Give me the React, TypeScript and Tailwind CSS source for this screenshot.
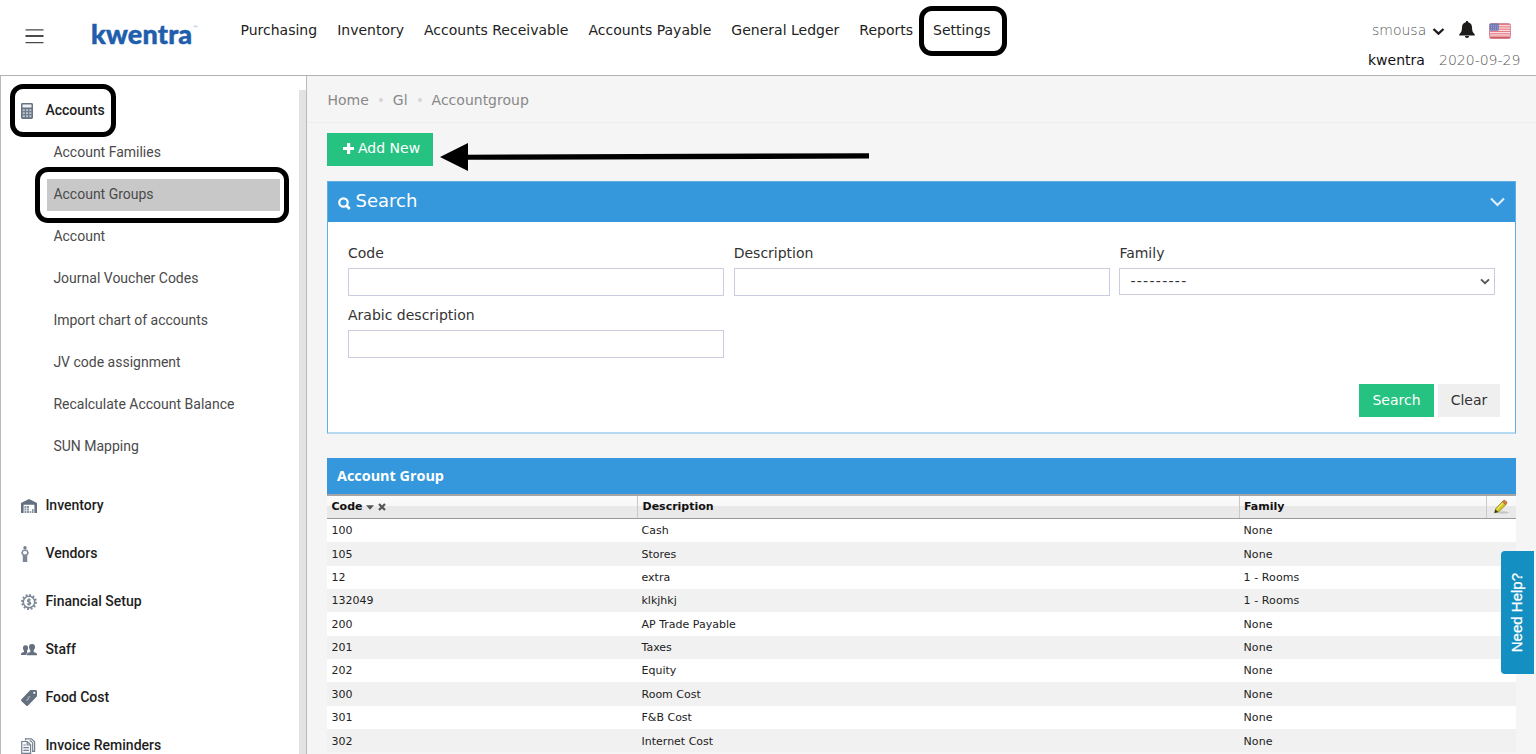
import React from "react";

const navItems = [
  "Purchasing",
  "Inventory",
  "Accounts Receivable",
  "Accounts Payable",
  "General Ledger",
  "Reports",
];

const accountLinks = [
  "Account Families",
  "Account Groups",
  "Account",
  "Journal Voucher Codes",
  "Import chart of accounts",
  "JV code assignment",
  "Recalculate Account Balance",
  "SUN Mapping",
];

const rows: [string, string, string][] = [
  ["100", "Cash", "None"],
  ["105", "Stores", "None"],
  ["12", "extra", "1 - Rooms"],
  ["132049", "klkjhkj", "1 - Rooms"],
  ["200", "AP Trade Payable", "None"],
  ["201", "Taxes", "None"],
  ["202", "Equity", "None"],
  ["300", "Room Cost", "None"],
  ["301", "F&B Cost", "None"],
  ["302", "Internet Cost", "None"],
];

function CalculatorIcon() {
  return (
    <svg width="16" height="16" viewBox="0 0 16 16">
      <rect x="0" y="0" width="12" height="16" rx="1.4" fill="#687483" />
      <rect x="1.5" y="1.5" width="9" height="3" rx="0.5" fill="#eef1f4" />
      {[6.2, 9.2, 12.2].map((y) =>
        [1.6, 4.9, 8.2].map((x) => (
          <rect key={`${x}-${y}`} x={x} y={y} width="2.2" height="2" fill="#b9c3cf" />
        ))
      )}
    </svg>
  );
}

function WarehouseIcon() {
  return (
    <svg width="16" height="16" viewBox="0 0 16 16">
      <path d="M0 5 8 1l8 4v10h-2.600V6.800H2.600V15H0z" fill="#64707f" />
      <path d="M3.400 8h2v2h-2zM6 8h2v2H6zM3.400 10.500h2v2h-2zM6 10.500h2v2H6zM3.400 13h2v2h-2zM6 13h2v2H6zM8.700 13h1.600v2H8.700zM11 11h1.600v4H11z" fill="#8b96a3" />
    </svg>
  );
}

function PersonIcon() {
  return (
    <svg width="16" height="16" viewBox="0 0 16 16">
      <circle cx="4" cy="1.800" r="1.700" fill="#74808e" />
      <path d="M2.300 4 1 7l1.300 2.200M5.700 4 7 7 5.700 9.200" stroke="#818c99" strokeWidth="1.600" fill="none" />
      <path d="M2 3.400h4L4 5.600z" fill="#74808e" />
      <path d="M1.800 8.400h4.400V16H1.800z" fill="#7b8794" />
    </svg>
  );
}

function GearMoneyIcon() {
  return (
    <svg width="16" height="16" viewBox="0 0 16 16" fill="none">
      <circle cx="8" cy="8" r="7" stroke="#7b8794" strokeWidth="1.900" strokeDasharray="1.900 1.765" />
      <circle cx="8" cy="8" r="5.700" stroke="#7b8794" strokeWidth="1.500" />
      <path d="M9.800 6.200C9.300 5.400 6.400 5.200 6.400 6.700c0 1.500 3.300.9 3.300 2.500 0 1.500-2.900 1.300-3.500.4M8 4.300v7.400" stroke="#74808e" strokeWidth="1.200" />
    </svg>
  );
}

function StaffIcon() {
  return (
    <svg width="16" height="16" viewBox="0 0 16 16" fill="#64707f">
      <path d="M4.500 3.200c1.800 0 2.600 1.100 2.600 2.700 0 1.200-.5 2.200-1.100 2.800v1.400l.8.400c-1 .6-1.300 1.500-1.300 2.500H0v-1.200c0-1.200 1.700-1.400 3-1.900V8.700c-.6-.6-1-1.600-1-2.800 0-1.600.7-2.700 2.500-2.700z" />
      <path d="M11 2c2.100 0 3 1.300 3 3.100 0 1.400-.6 2.500-1.300 3.200v1.600c1.500.6 3.300.9 3.300 2.300V13.300H6v-1.100c0-1.400 1.900-1.700 3.300-2.300V8.300C8.600 7.600 8 6.500 8 5.100 8 3.300 8.900 2 11 2z" />
    </svg>
  );
}

function TagIcon() {
  return (
    <svg width="16" height="16" viewBox="0 0 16 16">
      <path fill="#64707f" fillRule="evenodd" d="M9.300 0H15l1 1v5.200l-8.900 9.200c-.7.7-1.300.7-2 0L.5 11.200c-.6-.7-.6-1.300 0-2zM13.300 1.700a1.100 1.100 0 1 0 0 2.200 1.100 1.100 0 0 0 0-2.200z" />
      <path d="M9 7c-1.400-.9-2.700.3-1.800 1.400s-.5 2.300-1.800 1.400M5.500 10.600l3.600-4" stroke="#aab4bf" strokeWidth="0.900" fill="none" />
    </svg>
  );
}

function InvoiceIcon() {
  return (
    <svg width="16" height="16" viewBox="0 0 16 16" fill="none" stroke="#75818f" strokeWidth="1.200">
      <path d="M4.500 2.600V.8h6l3.100 3v9.600H11" />
      <path d="M8.500 2.900h1.200l2 2v8.400" />
      <path d="M.7 3.500h5.600l3.300 3.300v8.500H.7z" fill="#f4f6f8" />
      <path d="M6.200 3.700V7h3.300M2.400 7h2.200M2.400 9.700h5.500M2.400 12.400h5.500" />
    </svg>
  );
}

const sections: { label: string; icon: React.ReactNode }[] = [
  { label: "Inventory", icon: <WarehouseIcon /> },
  { label: "Vendors", icon: <PersonIcon /> },
  { label: "Financial Setup", icon: <GearMoneyIcon /> },
  { label: "Staff", icon: <StaffIcon /> },
  { label: "Food Cost", icon: <TagIcon /> },
  { label: "Invoice Reminders", icon: <InvoiceIcon /> },
];

function UsFlag() {
  return (
    <svg width="22" height="16" viewBox="0 0 22 16">
      <rect x="0.500" y="0.500" width="21" height="15" rx="1.800" fill="#fbeaec" stroke="#d58f99" />
      {[1, 3.300, 5.600, 7.900, 10.200, 12.500].map((y) => (
        <rect key={y} x="1" y={y} width="20" height="1.200" fill="#e77a84" />
      ))}
      <rect x="1" y="14" width="20" height="1.200" fill="#cf5968" />
      <rect x="0.600" y="0.600" width="9.200" height="7.200" rx="1" fill="#6f79b6" />
      <path d="M2 2.500h7M2 4.300h7M2 6.100h7" stroke="#aab1dc" strokeWidth="0.700" strokeDasharray="1 1" />
    </svg>
  );
}

function PencilIcon() {
  return (
    <svg width="17" height="16" viewBox="0 0 17 16">
      <ellipse cx="10" cy="13.500" rx="6" ry="1.200" fill="#c6c6c6" />
      <path d="M1.600 13.800 2.800 9.400 9.300 2.700l3.400 3.100-6.800 6.900z" fill="#d3c71f" stroke="#8f872b" strokeWidth="0.800" />
      <path d="m4 10.300 6.400-6.500" stroke="#efe97a" strokeWidth="1.200" />
      <path d="m9.300 2.700 1.500-1.500c.6-.5 3.500 1.700 3.200 2.800l-1.300 1.800z" fill="#d27b35" stroke="#a85e26" strokeWidth="0.600" />
      <path d="m1.500 14 .9-3.500 2.700 2.500z" fill="#33331f" />
    </svg>
  );
}

function TextField({ label }: { label: string }) {
  return (
    <label className="block h-[62px]">
      <span className="block h-[25px] text-[14px] leading-[20px] text-[#333]">{label}</span>
      <input className="block h-[28px] w-full border border-[#c9cddd] bg-white px-3 outline-none" />
    </label>
  );
}

export default function App() {
  return (
    <div className="relative flex h-[754px] w-[1536px] flex-col overflow-hidden bg-[#f5f5f5] font-['DejaVu_Sans',sans-serif]">
      <header className="flex h-[76px] shrink-0 border-b border-[#b3b3b3] bg-white">
        <div className="flex w-[240.500px] shrink-0 pl-[25px]">
          <svg className="mt-[29px]" width="19" height="15" viewBox="0 0 19 15" fill="#4a4a4a">
            <path d="M0.500 0.200h18v1.300H.5zM.5 6h18v2H.5zM.5 13h18v1.300H.5z" />
          </svg>
          <div className="mt-[17px] ml-[47px] flex h-[34px] items-start text-[#1f5ead]">
            <span className="font-['Lato',sans-serif] text-[27px] leading-[34px] font-black tracking-[0.200px] [-webkit-text-stroke:0.500px_#1f5ead]">kwentra</span>
            <span className="mt-[8px] text-[6px] leading-[5px] text-[#6c97cb]">™</span>
          </div>
        </div>
        <nav className="flex grow gap-[20px] pt-[20px] text-[14px] leading-[20px] text-[#222]">
          {navItems.map((item) => (
            <a key={item}>{item}</a>
          ))}
          <a className="relative">
            Settings
            <span className="absolute -top-[14.500px] -left-[14.500px] h-[50px] w-[88px] rounded-[13px] border-[5px] border-black" />
          </a>
        </nav>
        <div className="flex w-[168px] shrink-0 flex-col text-[14px]">
          <div className="mt-[20px] flex h-[20px] items-center pl-[4px] leading-[20px]">
            <span className="w-[54px] font-extralight text-[#555]">smousa</span>
            <svg className="mt-[2px] ml-[6px]" width="13" height="9" viewBox="0 0 13 9" fill="none">
              <path d="m1.500 2 5 4.600 5-4.600" stroke="#1c1c1c" strokeWidth="2.300" />
            </svg>
            <svg className="-mt-px ml-[14px]" width="16" height="17" viewBox="0 0 16 17" fill="#1d1a1a">
              <path d="M8 0c.8 0 1.200.5 1.200 1.300C11.600 1.900 13 3.800 13 6.200c0 3.800 1 5.600 2.700 7v1.300H.3v-1.300C2 11.800 3 10 3 6.200c0-2.400 1.400-4.300 3.800-4.900C6.800.5 7.200 0 8 0zM5.900 15h4.200c0 1.200-.9 2-2.100 2s-2.100-.8-2.100-2z" />
            </svg>
            <span className="mt-[2px] ml-[14px]">
              <UsFlag />
            </span>
          </div>
          <div className="mt-[10px] flex leading-[20px]">
            <span className="w-[71px] text-[#111]">kwentra</span>
            <span className="font-extralight text-[#555]">2020-09-29</span>
          </div>
        </div>
      </header>

      <div className="flex min-h-0 grow">
        <aside className="flex w-[307px] shrink-0 justify-between border-x border-[#b9b9b9] bg-white font-['Roboto',sans-serif] text-[14px]">
          <div className="flex flex-col">
            <div className="relative mt-[19px] flex h-[32px] shrink-0 items-center pl-[20px]">
              <CalculatorIcon />
              <span className="ml-[8.400px] pb-px font-medium text-[#1e1e1e]">Accounts</span>
              <span className="absolute -top-[11.500px] left-[8.500px] h-[53px] w-[106px] rounded-[13px] border-[5px] border-black" />
            </div>
            <div className="mt-[5px] mb-[14px] flex shrink-0 flex-col pl-[46px]">
              {accountLinks.map((link) => (
                <div key={link} className="relative flex h-[41.950px] items-center">
                  <a
                    className={
                      link === "Account Groups"
                        ? "flex h-[32px] w-[233px] items-center bg-[#c8c8c8] pb-px pl-[6.400px] text-[#4a4a4a]"
                        : "flex h-[32px] w-[233px] items-center pb-px pl-[6.400px] text-[#4a4a4a]"
                    }
                  >
                    {link}
                  </a>
                  {link === "Account Groups" && (
                    <span className="absolute -top-[6.500px] -left-[12.500px] h-[56px] w-[254px] rounded-[13px] border-[5px] border-black" />
                  )}
                </div>
              ))}
            </div>
            {sections.map((section) => (
              <div key={section.label} className="flex h-[48px] shrink-0 items-center pl-[20px] font-medium text-[#1e1e1e]">
                {section.icon}
                <span className="ml-[8.400px] pb-px">{section.label}</span>
              </div>
            ))}
          </div>
          <div className="mt-[14px] w-[7px] shrink-0 bg-[#e3e3e3]" />
        </aside>

        <main className="flex min-w-0 grow flex-col">
          <div className="flex h-[47px] shrink-0 items-center border-b border-[#eeeeee] pt-[2px] pl-[20.500px] text-[14px] text-[#888]">
            <span>Home</span>
            <span className="mx-[10px] size-[4px] rounded-full bg-[#d5d5d5]" />
            <span>Gl</span>
            <span className="mx-[10px] size-[4px] rounded-full bg-[#d5d5d5]" />
            <span>Accountgroup</span>
          </div>

          <div className="flex flex-col pr-[20px] pl-[20px]">
            <div className="mt-[10px] flex h-[33px]">
              <button className="flex h-[33px] w-[106px] items-center bg-[#26c281] pb-[2px] pl-[16px] text-[14px] text-white">
                <svg className="mr-[4px]" width="11" height="12" viewBox="0 0 11 12">
                  <path d="M4 0h3.200v4H11v3H7.200v4H4v-4H0v-3h4z" fill="white" />
                </svg>
                Add New
              </button>
              <svg className="mt-[10px] ml-[7px]" width="430" height="29" viewBox="0 0 430 29">
                <path d="M0 14 28 0v28zM26 11.700 429 10.200v5.400L26 16.800z" fill="#000" />
              </svg>
            </div>

            <section className="mt-[15px] h-[253px] border border-[#60aee4] border-b-2 border-b-[#b5d9f1] bg-white">
              <div className="flex h-[40px] items-center bg-[#3598dc] pr-[10px] pl-[10px] text-white">
                <svg className="mt-[3px]" width="13" height="13" viewBox="0 0 13 13" fill="none" stroke="white">
                  <circle cx="5.500" cy="5.500" r="4.200" strokeWidth="2.200" />
                  <path d="m8.500 8.500 3.200 3.500" strokeWidth="2.600" />
                </svg>
                <span className="ml-[4.500px] grow pb-[2px] text-[18px] leading-[24px]">Search</span>
                <svg width="15" height="10" viewBox="0 0 15 10" fill="none">
                  <path d="m1 1.500 6.500 6.500L14 1.500" stroke="#e2effa" strokeWidth="2.100" />
                </svg>
              </div>
              <div className="grid grid-cols-[376px_376px_376px] gap-x-[9.700px] px-[20px] pt-[21px]">
                <TextField label="Code" />
                <TextField label="Description" />
                <div>
                  <span className="block h-[25px] text-[14px] leading-[20px] text-[#333]">Family</span>
                  <div className="flex h-[27px] items-center justify-between border border-[#c9cddd] bg-white pr-[4px] pl-[10px] text-[14px] text-[#333]">
                    <span className="tracking-[1.300px]">---------</span>
                    <svg width="10" height="7" viewBox="0 0 10 7" fill="none">
                      <path d="m1 1.300 4 3.900 4-3.900" stroke="#555" strokeWidth="1.800" />
                    </svg>
                  </div>
                </div>
                <TextField label="Arabic description" />
              </div>
              <div className="mt-[17px] mr-[15px] flex justify-end gap-[4px] text-[14px]">
                <button className="h-[33px] w-[75px] bg-[#26c281] pb-px text-white">Search</button>
                <button className="h-[33px] w-[62px] bg-[#efefef] pb-px text-[#333]">Clear</button>
              </div>
            </section>

            <section className="mt-[24px]">
              <h2 className="flex h-[36px] items-center bg-[#3598dc] pb-px pl-[10px] font-['Open_Sans',sans-serif] text-[14.400px] font-bold text-white">
                Account Group
              </h2>
              <div className="grid h-[25px] grid-cols-[311px_602px_247px_29px] border-t-2 border-b border-t-[#a5a5a5] border-b-[#999] bg-[linear-gradient(#fcfcfc_0%,#f7f7f7_45%,#e8e8e8_48%,#eaeaea_100%)] text-[11px] leading-[20px] font-bold text-[#111]">
                <div className="flex items-center border-r border-[#c9c9c9] pl-[4.500px]">
                  Code
                  <svg className="ml-[4px]" width="8" height="5" viewBox="0 0 8 5">
                    <path d="M0 .3h8L4 4.800z" fill="#555" />
                  </svg>
                  <svg className="ml-[4px]" width="8" height="8" viewBox="0 0 8 8">
                    <path d="m1 1 6 6M7 1 1 7" stroke="#555" strokeWidth="2.200" />
                  </svg>
                </div>
                <div className="border-r border-[#c9c9c9] pt-px pl-[4.500px]">Description</div>
                <div className="border-r border-[#c9c9c9] pt-px pl-[4px]">Family</div>
                <div className="flex items-center pl-[6px]">
                  <PencilIcon />
                </div>
              </div>
              <div className="flex flex-col">
                {rows.map(([code, description, family]) => (
                  <div
                    key={code}
                    className="grid h-[23.350px] grid-cols-[311px_602px_276px] items-center bg-white pt-[2px] text-[11px] text-[#222] even:bg-[#f1f1f1]"
                  >
                    <span className="pl-[4.500px]">{code}</span>
                    <span className="pl-[3.500px]">{description}</span>
                    <span className="pl-[3.500px] tracking-[0.100px]">{family}</span>
                  </div>
                ))}
              </div>
            </section>
          </div>
        </main>
      </div>

      <div className="absolute top-[551px] right-[2px] flex h-[123px] w-[33px] items-center justify-center rounded-l-[4px] bg-[#148fc1] pr-[2px] text-white">
        <span className="rotate-180 font-['Liberation_Sans',sans-serif] text-[15px] leading-[18px] whitespace-nowrap [-webkit-text-stroke:0.300px_white] [writing-mode:vertical-rl]">
          Need Help?
        </span>
      </div>
    </div>
  );
}
